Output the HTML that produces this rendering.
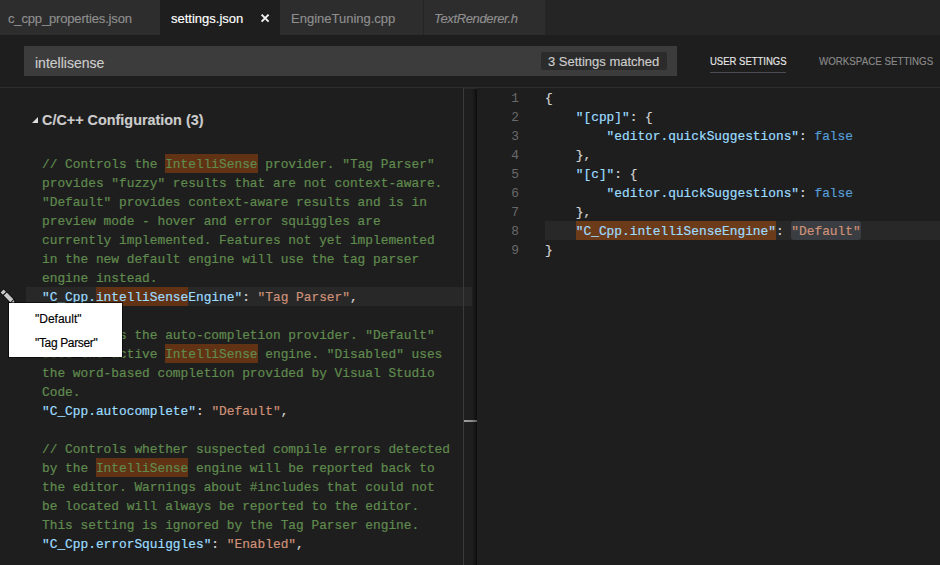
<!DOCTYPE html>
<html><head><meta charset="utf-8">
<style>
*{margin:0;padding:0;box-sizing:border-box}
html,body{width:940px;height:565px;overflow:hidden;background:#1e1e1e}
body{position:relative;font-family:"Liberation Sans",sans-serif;-webkit-text-stroke:0.15px currentColor}
.abs{position:absolute}
#tabs{left:0;top:0;width:940px;height:35px;background:#252526}
.tab{position:absolute;top:0;height:35px;background:#2d2d2d;color:#8f8f8f;font-size:13px;line-height:37px;white-space:nowrap}
.tab.active{background:#1e1e1e;color:#ffffff}
#search{left:24px;top:46px;width:653px;height:30px;background:#3c3c3c}
#stext{left:35px;top:48px;height:30px;line-height:30px;font-size:14px;color:#cccccc}
#badge{left:541px;top:52px;width:126px;height:18px;background:#2b2b2b;border-radius:2px;color:#cccccc;font-size:13px;line-height:20px;padding-left:7px;white-space:nowrap}
.stab{font-size:11px;white-space:nowrap;top:51px;line-height:20px;transform:scaleX(0.864);transform-origin:0 0}
#divider{left:0;top:87px;width:940px;height:1px;background:#2d2d2d}
.code{position:absolute;font-family:"Liberation Mono",monospace;font-size:12.83px;line-height:19px;white-space:pre;color:#d4d4d4;-webkit-text-stroke:0.2px currentColor}
.c{color:#608b4e}.k{color:#9cdcfe}.s{color:#ce9178}.b{color:#569cd6}
.m{background:#613214;padding:3.23px 0 1.23px}
.ln{color:#6a6a6a;text-align:right;-webkit-text-stroke:0}
</style></head><body>
<div id="tabs" class="abs">
  <div class="tab" style="left:0;width:160px;padding-left:8px;letter-spacing:-0.16px">c_cpp_properties.json</div>
  <div class="tab active" style="left:160px;width:120px;padding-left:11px">settings.json</div>
  <div class="tab" style="left:280px;width:143px;padding-left:11px">EngineTuning.cpp</div>
  <div class="tab" style="left:424px;width:121px;padding-left:10px;font-style:italic;letter-spacing:-0.36px">TextRenderer.h</div>
  <svg class="abs" style="left:260px;top:13px" width="11" height="11" viewBox="0 0 11 11"><path d="M1.6 1.6L8.6 8.6M8.6 1.6L1.6 8.6" stroke="#f0f0f0" stroke-width="2"/></svg>
</div>
<div id="search" class="abs"></div>
<div id="stext" class="abs">intellisense</div>
<div id="badge" class="abs">3 Settings matched</div>
<div class="abs stab" style="left:710px;color:#e7e7e7">USER SETTINGS</div>
<div class="abs" style="left:710px;top:72px;width:76px;height:1px;background:#4b4b55"></div>
<div class="abs stab" style="left:819px;color:#8a8a8a;transform:scaleX(0.887)">WORKSPACE SETTINGS</div>
<div id="divider" class="abs"></div>

<!-- left panel -->
<svg class="abs" style="left:31.5px;top:116.5px" width="6" height="6" viewBox="0 0 6 6"><path d="M6 0L6 6L0 6Z" fill="#dcdcdc"/></svg>
<div class="abs" style="left:42px;top:110px;font-size:14.4px;font-weight:bold;color:#cccccc;line-height:20px;white-space:nowrap">C/C++ Configuration (3)</div>
<div class="abs" style="left:26px;top:287px;width:450px;height:19px;background:#282828"></div>
<div class="code" style="left:42px;top:155px"><span class="c">// Controls the <span class="m">IntelliSense</span> provider. "Tag Parser"
provides "fuzzy" results that are not context-aware.
"Default" provides context-aware results and is in
preview mode - hover and error squiggles are
currently implemented. Features not yet implemented
in the new default engine will use the tag parser
engine instead.</span>
<span class="k">"C_Cpp.<span class="m">intelliSense</span>Engine"</span>: <span class="s">"Tag Parser"</span>,

<span class="c">// Controls the auto-completion provider. "Default"
uses the active <span class="m">IntelliSense</span> engine. "Disabled" uses
the word-based completion provided by Visual Studio
Code.</span>
<span class="k">"C_Cpp.autocomplete"</span>: <span class="s">"Default"</span>,

<span class="c">// Controls whether suspected compile errors detected
by the <span class="m">IntelliSense</span> engine will be reported back to
the editor. Warnings about #includes that could not
be located will always be reported to the editor.
This setting is ignored by the Tag Parser engine.</span>
<span class="k">"C_Cpp.errorSquiggles"</span>: <span class="s">"Enabled"</span>,</div>

<div class="abs" style="left:463px;top:88px;width:1px;height:477px;background:#3a3a3a"></div>
<div class="abs" style="left:472px;top:88px;width:5px;height:477px;background:linear-gradient(to right,#1e1e1e 0,#181818 45%,#0c0c0c 100%)"></div><div class="abs" style="left:464px;top:88px;width:13px;height:1px;background:#282828"></div>
<div class="abs" style="left:464px;top:420px;width:13px;height:2px;background:linear-gradient(to right,#a0a0a0,#8c8c8c 60%,#585858)"></div>

<!-- right editor -->
<div class="abs" style="left:545px;top:221px;width:395px;height:19px;background:#282828"></div>
<div class="code ln" style="left:490px;top:89px;width:29px">1
2
3
4
5
6
7
8
9</div>
<div class="code" style="left:545px;top:89px">{
    <span class="k">"[cpp]"</span>: {
        <span class="k">"editor.quickSuggestions"</span>: <span class="b">false</span>
    },
    <span class="k">"[c]"</span>: {
        <span class="k">"editor.quickSuggestions"</span>: <span class="b">false</span>
    },
    <span class="k m" style="background:#6c3b1a">"C_Cpp.intelliSenseEngine"</span>: <span class="s" style="background:#3a3d41;border-radius:3px;padding:3.23px 0 1.23px">"Default"</span>
}</div>

<!-- popup -->
<svg class="abs" style="left:0;top:283px" width="20" height="24" viewBox="0 0 20 24"><g transform="translate(2.1 7.9) rotate(45)"><path d="M-0.7 -2.8H15.6L19 0L15.6 2.8H-0.7Z" fill="#0e0e0e"/><rect x="0" y="-2.1" width="3.3" height="4.2" fill="#c8c8c8"/><rect x="4.5" y="-2.1" width="9.3" height="4.2" fill="#c8c8c8"/><path d="M14.8 -2.1L17.2 0L14.8 2.1Z" fill="#c8c8c8"/></g></svg>

<div class="abs" style="left:9px;top:303px;width:113px;height:54px;background:#ffffff;box-shadow:0 0 0 1px rgba(0,0,0,.6)"></div>
<div class="abs" style="left:35px;top:307px;font-size:12px;line-height:24px;color:#000;white-space:nowrap">"Default"<br><span style="letter-spacing:-0.35px">"Tag Parser"</span></div>

</body></html>
